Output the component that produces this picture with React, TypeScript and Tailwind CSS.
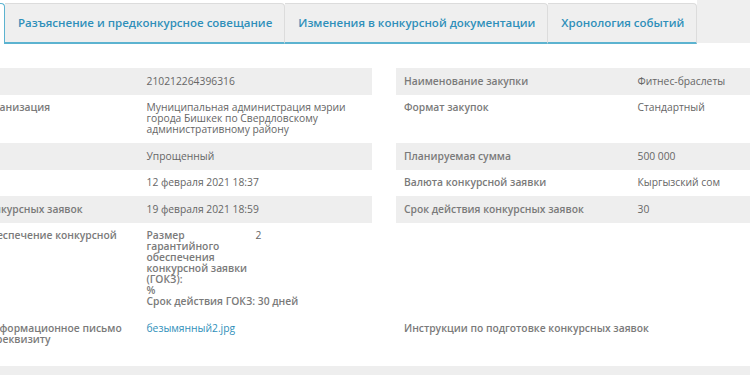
import type { ReactNode } from 'react';

type Cell = { label?: ReactNode; value?: ReactNode; wide?: boolean };

interface RowProps {
  left: Cell;
  right: Cell;
  shaded?: boolean;
  extraBottom?: boolean;
}

function Half({ cell, shaded, extraBottom }: { cell: Cell; shaded?: boolean; extraBottom?: boolean }) {
  return (
    <div className={`grid grid-cols-2 ${shaded ? 'bg-[#eeeeee]' : 'bg-white'}`}>
      <div
        className={`px-2 pt-[7.75px] ${extraBottom ? 'pb-[17.25px]' : 'pb-[7.75px]'} font-semibold text-[#7a7a7a] ${
          cell.wide ? 'col-span-2 whitespace-nowrap' : ''
        }`}
      >
        {cell.label}
      </div>
      {!cell.wide && <div className="px-2 py-[7.75px] text-[#666666]">{cell.value}</div>}
    </div>
  );
}

function Row({ left, right, shaded, extraBottom }: RowProps) {
  return (
    <div className="grid grid-cols-[467px_467px] gap-x-6 text-[10.3px] leading-[11px]">
      <Half cell={left} shaded={shaded} extraBottom={extraBottom} />
      <Half cell={right} shaded={shaded} />
    </div>
  );
}

const tabs = [
  'Разъяснение и предконкурсное совещание',
  'Изменения в конкурсной документации',
  'Хронология событий',
];

export default function App() {
  return (
    <div className="w-[750px] h-[375px] overflow-hidden bg-white font-['Open_Sans',sans-serif]">
      <div className="-ml-[95px] w-[1200px]">
        {/* tabs */}
        <div className="flex h-[44px]">
          <div className="mt-[3px] w-[100px] rounded-t-[4px] border border-b-0 border-[#5cb3d0] bg-white px-[13px] flex items-center text-[11.5px] font-semibold text-[#555]">
            Лоты
          </div>
          {tabs.map((t) => (
            <div
              key={t}
              className="mt-[3px] flex items-center whitespace-nowrap rounded-tr-[4px] border-t border-r border-b-2 border-[#dcdcdc] border-b-[#5cb3d0] bg-[#efefef] pl-[13px] pr-3 text-[11.5px] font-semibold text-[#2f8fba]"
            >
              {t}
            </div>
          ))}
          <div className="h-[43px] flex-1 bg-[#efefef]" />
        </div>

        {/* details */}
        <div className="mt-[24px]">
          <Row
            shaded
            left={{ label: 'Номер', value: '210212264396316' }}
            right={{ label: 'Наименование закупки', value: 'Фитнес-браслеты' }}
          />
          <Row
            left={{
              label: 'Закупающая организация',
              value: 'Муниципальная администрация мэрии города Бишкек по Свердловскому административному району',
            }}
            right={{ label: 'Формат закупок', value: 'Стандартный' }}
          />
          <Row
            shaded
            left={{ label: 'Метод', value: 'Упрощенный' }}
            right={{ label: 'Планируемая сумма', value: '500 000' }}
          />
          <Row
            left={{ label: 'Опубликовано', value: '12 февраля 2021 18:37' }}
            right={{ label: 'Валюта конкурсной заявки', value: 'Кыргызский сом' }}
          />
          <Row
            shaded
            left={{ label: 'Срок подачи конкурсных заявок', value: '19 февраля 2021 18:59' }}
            right={{ label: 'Срок действия конкурсных заявок', value: '30' }}
          />
          <Row
            extraBottom
            left={{
              label: 'Гарантийное обеспечение конкурсной заявки',
              value: (
                <div>
                  <div className="grid grid-cols-[109px_auto]">
                    <div className="font-semibold text-[#7a7a7a]">
                      Размер
                      <br />
                      гарантийного
                      <br />
                      обеспечения
                      <br />
                      конкурсной заявки
                      <br />
                      (ГОКЗ):
                      <br />%
                    </div>
                    <div>2</div>
                  </div>
                  <div className="font-semibold text-[#7a7a7a]">Срок действия ГОКЗ: 30 дней</div>
                </div>
              ),
            }}
            right={{}}
          />
          <Row
            left={{
              label: 'Прилагаемое информационное письмо по платежному реквизиту',
              value: <a className="text-[#2f8fba]">безымянный2.jpg</a>,
            }}
            right={{ label: 'Инструкции по подготовке конкурсных заявок', wide: true }}
          />
        </div>

        <div className="mt-[13px] h-[40px] bg-[#eeeeee]" />
      </div>
    </div>
  );
}
